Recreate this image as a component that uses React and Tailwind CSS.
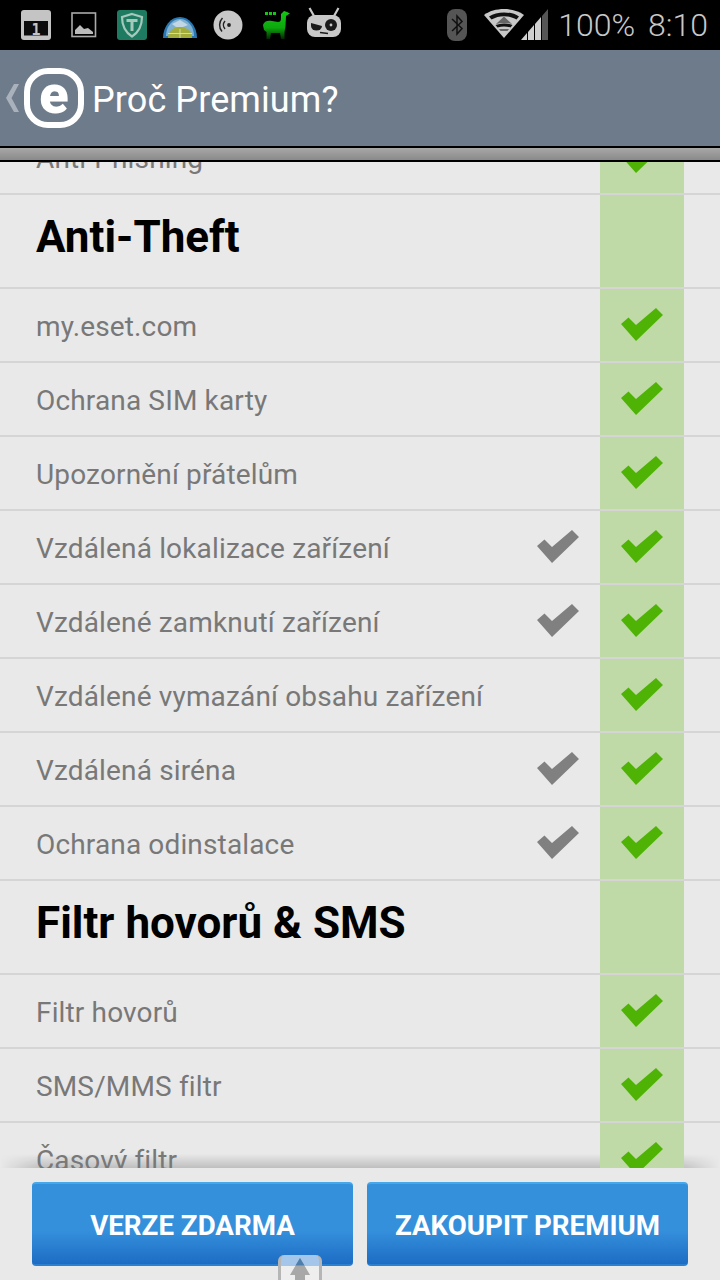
const Check = ({ color }) => (
  <svg width="42" height="33" viewBox="0 0 42 33" className="mb-[2px] block">
    <polygon points="0,16 7.5,9.5 15,17 35,0 42,7 15,33" fill={color} />
  </svg>
);

const Row = ({ label, free }) => (
  <div className="flex h-[74px] shrink-0 border-b-2 border-[#d5d5d5]">
    <div className="flex flex-1 items-center justify-between pl-[36px] pr-[21px]">
      <span className="pt-[4px] text-[28px] tracking-[0.15px] text-[#787878]">{label}</span>
      {free && <Check color="#808080" />}
    </div>
    <div className="mr-[36px] flex w-[84px] items-center justify-center bg-[#bfdaa7]">
      <Check color="#4fb306" />
    </div>
  </div>
);

const Head = ({ label }) => (
  <div className="flex h-[94px] shrink-0 border-b-2 border-[#d5d5d5]">
    <div className="flex flex-1 items-center pl-[36px]">
      <span className="pb-[8px] text-[44px] font-bold text-black">{label}</span>
    </div>
    <div className="mr-[36px] w-[84px] bg-[#bfdaa7]" />
  </div>
);

const StatusIcons = () => (
  <svg width="350" height="50" viewBox="0 0 350 50" className="block">
    <defs>
      <linearGradient id="ll" x1="0" y1="0" x2="0" y2="1">
        <stop offset="0" stopColor="#12c812" />
        <stop offset="0.6" stopColor="#0da80d" />
        <stop offset="1" stopColor="#022802" />
      </linearGradient>
    </defs>
    {/* calendar */}
    <rect x="21" y="10" width="30" height="30" rx="3" fill="#c4c4c4" />
    <rect x="24" y="21" width="24" height="14.5" fill="#0c0c0c" />
    <text x="36" y="35" textAnchor="middle" fontFamily="'DejaVu Sans Mono', monospace" fontWeight="700" fontSize="15" fill="#c4c4c4">1</text>
    {/* picture */}
    <rect x="72" y="13" width="23.5" height="23.5" fill="none" stroke="#aaa" strokeWidth="1.6" />
    <path d="M75 34 L75 30 L80 25 L84 29 L88 28 L93 32 L93 34 Z" fill="#bbb" />
    {/* T shield */}
    <rect x="117" y="10" width="30" height="30" rx="3" fill="#1f7a62" />
    <path d="M132 14 L142 17 C142 26 139 32 132 36.5 C125 32 122 26 122 17 Z" fill="none" stroke="#a5c9bb" strokeWidth="2.2" />
    <path d="M126.5 19 H137.5 V22 H133.5 V31 H130.5 V22 H126.5 Z" fill="#a5c9bb" />
    {/* globe */}
    <path d="M163 38 A17 21 0 0 1 197 38 Z" fill="#2a78b2" />
    <path d="M166 36 A14 17 0 0 1 194 36 Z" fill="#7fb0d2" />
    <path d="M172 24 L180 20 L188 25 L183 27 L176 27 Z" fill="#c2d6e4" />
    <path d="M168 38 C168 31 173 27 180 27 C187 27 192 31 192 38 Z" fill="#a3ad3a" />
    <rect x="168" y="33" width="24" height="1" fill="#d6dca0" />
    <rect x="179.5" y="29" width="1" height="9" fill="#d6dca0" />
    {/* disc */}
    <circle cx="228" cy="25" r="14.5" fill="#c8c8c8" />
    <circle cx="229" cy="25" r="1.9" fill="#222" />
    <path d="M225 21 A6 6 0 0 0 225 29" fill="none" stroke="#222" strokeWidth="1.5" />
    <path d="M222.5 18 A10 10 0 0 0 222 31.5" fill="none" stroke="#222" strokeWidth="1.5" />
    {/* llama */}
    <path d="M263 25 C264 21 268 20 272 21 L278 22 C280 22 281 21 281 18 L281 14 L284 11 L287 12 L290 13.5 L286 16 L285.5 26 L284.5 32 L284.5 39 L281 39 L280 33 L271 33 L270 39 L266.5 39 L266.5 32 L264 30 Z" fill="url(#ll)" />
    <rect x="265" y="12" width="3" height="3" fill="#12c812" />
    <rect x="269" y="12" width="3" height="3" fill="#12c812" />
    <rect x="273" y="12" width="3" height="3" fill="#12c812" />
    {/* android head */}
    <path d="M309.5 8 L314 16 M338.5 8 L334 16" stroke="#c8c8c8" strokeWidth="2.2" fill="none" />
    <rect x="307" y="15" width="34" height="22" rx="8" fill="#c8c8c8" />
    <path d="M311 23 L322 26 A5.5 4.5 0 0 1 311 26 Z" fill="#1a1a1a" />
    <circle cx="331" cy="25" r="6" fill="#1a1a1a" />
    <circle cx="331" cy="25" r="1.4" fill="#c8c8c8" />
    <path d="M320 32.5 L328 33.5" stroke="#1a1a1a" strokeWidth="1.4" />
  </svg>
);

const Right = () => (
  <div className="flex items-center">
    <svg width="22" height="34" viewBox="0 0 22 34" className="mr-[16px] block">
      <rect x="1" y="1" width="20" height="32" rx="8" fill="#555" />
      <path d="M6 11 L16 20.5 L11 26 L11 8 L16 13.5 L6 23" fill="none" stroke="#111" strokeWidth="1.5" />
    </svg>
    <svg width="66" height="34" viewBox="0 0 66 34" className="block">
      <path d="M0 7 C10 -1 30 -1 40 7 L20 30 Z" fill="#c8c8c8" />
      <path d="M5 8.5 C13 3 27 3 35 8.5 L32.5 11.5 C25 7 15 7 7.5 11.5 Z" fill="#111" />
      <path d="M12 16 L20 8.5 L28 16 C23 14.5 17 14.5 12 16 Z" fill="#666" />
      <path d="M11.5 17 C17 15 23 15 28.5 17 L26.5 19.5 C22 18 18 18 13.5 19.5 Z" fill="#111" />
      <path d="M15 21 L25 21 L23.5 23 L16.5 23 Z" fill="#666" />
      <polygon points="37,32 43,25 43,32" fill="#d0d0d0" />
      <polygon points="44,24 50,17 50,32 44,32" fill="#d0d0d0" />
      <polygon points="51,16 57,9 57,32 51,32" fill="#d0d0d0" />
      <polygon points="58,8 64,1 64,32 58,32" fill="#555" />
    </svg>
    <span className="ml-[8px] text-[32px] font-light leading-none text-[#c8c8c8]">100%</span>
    <span className="mr-[12px] ml-[13px] text-[32px] font-light leading-none text-[#c8c8c8]">8:10</span>
  </div>
);

const Btn = ({ label }) => (
  <button className="flex h-[84px] flex-1 items-center justify-center rounded-[4px] border-t-2 border-b-2 border-t-[#45a8ea] border-b-[#2c80d0] bg-gradient-to-b from-[#3590dc] from-[58%] to-[#1d6cc4] pt-[3px] text-[27.7px] font-bold text-white">
    {label}
  </button>
);

export default function App() {
  const font = { fontFamily: "Roboto, sans-serif" };
  return (
    <div style={font} className="relative flex h-[1280px] w-[720px] flex-col overflow-hidden bg-[#e9e9e9]">
      <div className="flex h-[50px] shrink-0 items-center justify-between bg-black">
        <StatusIcons />
        <Right />
      </div>
      <div className="flex h-[96px] shrink-0 items-center bg-[#6e7b8b]">
        <svg width="14" height="28" viewBox="0 0 14 28" className="ml-[6px] block">
          <polygon points="13,0 5.5,14 13,28 8,28 0,14 8,0" fill="#a9b2bc" />
        </svg>
        <div className="ml-[4px] flex h-[60px] w-[60px] items-center justify-center rounded-[24px] border-[6px] border-white">
          <span className="pb-[6px] text-[54px] font-black leading-none text-white">e</span>
        </div>
        <span className="ml-[8px] pt-[4px] text-[36px] tracking-[0.1px] text-white">Proč Premium?</span>
      </div>
      <div className="h-[16px] shrink-0 border-y-2 border-black bg-gradient-to-b from-[#a8a8a8] to-[#8a8a8a]" />
      <div className="relative min-h-0 flex-1 overflow-hidden">
        <div className="absolute inset-x-0 bottom-0 h-[14px] bg-gradient-to-b from-transparent to-[rgba(0,0,0,0.18)] [mask-image:linear-gradient(90deg,transparent,black_40px,black_calc(100%-40px),transparent)]" />
        <div className="relative z-10 -mt-[41px] flex flex-col">
          <Row label="Anti-Phishing" />
          <Head label="Anti-Theft" />
          <Row label="my.eset.com" />
          <Row label="Ochrana SIM karty" />
          <Row label="Upozornění přátelům" />
          <Row label="Vzdálená lokalizace zařízení" free />
          <Row label="Vzdálené zamknutí zařízení" free />
          <Row label="Vzdálené vymazání obsahu zařízení" />
          <Row label="Vzdálená siréna" free />
          <Row label="Ochrana odinstalace" free />
          <Head label="Filtr hovorů & SMS" />
          <Row label="Filtr hovorů" />
          <Row label="SMS/MMS filtr" />
          <Row label="Časový filtr" />
        </div>
      </div>
      <div className="relative flex h-[112px] shrink-0 gap-[14px] bg-[#e9e9e9] px-[32px] pt-[14px]">
        <Btn label="VERZE ZDARMA" />
        <Btn label="ZAKOUPIT PREMIUM" />
      </div>
      <div className="absolute bottom-0 left-[278px] h-[25px] w-[44px] rounded-t-[6px] border-x-[3px] border-[#b5b5b5] bg-gradient-to-b from-[#a3c6ea] from-[44%] to-[#eeeeee] to-[44%]">
        <svg width="38" height="25" viewBox="0 0 38 25" className="block">
          <path d="M19 3 L29 20 L24 20 L24 25 L14 25 L14 20 L9 20 Z" fill="#a8a8a8" />
          <path d="M19 3 L23.5 10.5 L14.5 10.5 Z" fill="#4d7fae" />
        </svg>
      </div>
    </div>
  );
}
